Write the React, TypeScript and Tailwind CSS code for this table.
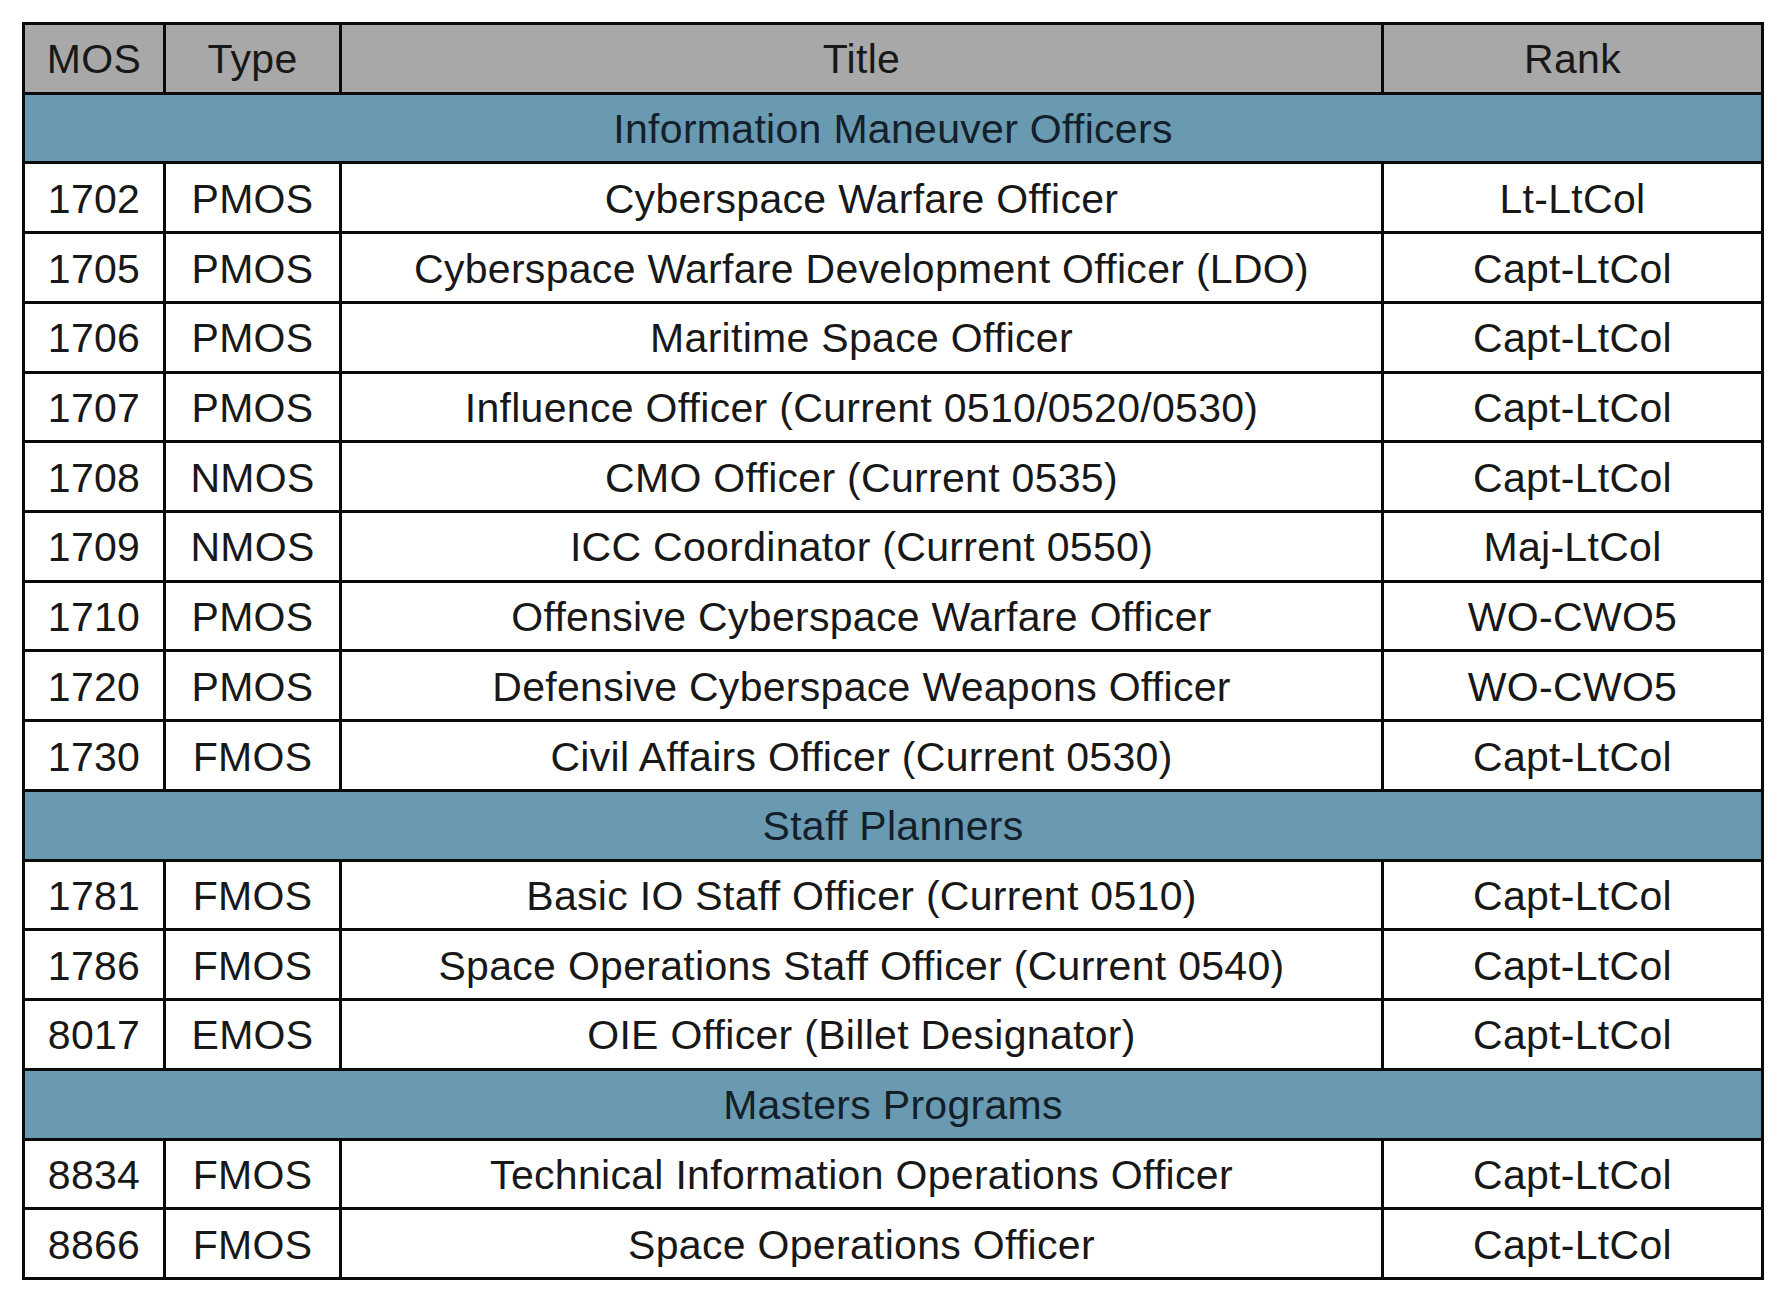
import React from "react";

type Row = { mos: string; type: string; title: string; rank: string } | { section: string };

const rows: Row[] = [
  { section: "Information Maneuver Officers" },
  { mos: "1702", type: "PMOS", title: "Cyberspace Warfare Officer", rank: "Lt-LtCol" },
  { mos: "1705", type: "PMOS", title: "Cyberspace Warfare Development Officer (LDO)", rank: "Capt-LtCol" },
  { mos: "1706", type: "PMOS", title: "Maritime Space Officer", rank: "Capt-LtCol" },
  { mos: "1707", type: "PMOS", title: "Influence Officer (Current 0510/0520/0530)", rank: "Capt-LtCol" },
  { mos: "1708", type: "NMOS", title: "CMO Officer (Current 0535)", rank: "Capt-LtCol" },
  { mos: "1709", type: "NMOS", title: "ICC Coordinator (Current 0550)", rank: "Maj-LtCol" },
  { mos: "1710", type: "PMOS", title: "Offensive Cyberspace Warfare Officer", rank: "WO-CWO5" },
  { mos: "1720", type: "PMOS", title: "Defensive Cyberspace Weapons Officer", rank: "WO-CWO5" },
  { mos: "1730", type: "FMOS", title: "Civil Affairs Officer (Current 0530)", rank: "Capt-LtCol" },
  { section: "Staff Planners" },
  { mos: "1781", type: "FMOS", title: "Basic IO Staff Officer (Current 0510)", rank: "Capt-LtCol" },
  { mos: "1786", type: "FMOS", title: "Space Operations Staff Officer (Current 0540)", rank: "Capt-LtCol" },
  { mos: "8017", type: "EMOS", title: "OIE Officer (Billet Designator)", rank: "Capt-LtCol" },
  { section: "Masters Programs" },
  { mos: "8834", type: "FMOS", title: "Technical Information Operations Officer", rank: "Capt-LtCol" },
  { mos: "8866", type: "FMOS", title: "Space Operations Officer", rank: "Capt-LtCol" },
];

const cell = "flex items-center justify-center whitespace-nowrap pt-[3px]";

export default function App() {
  return (
    <div
      className="min-h-[1303px] w-[1784px] bg-white pt-[22px] pl-[22px] text-[41px] leading-none tracking-[0.3px] text-[#181818]"
      style={{ fontFamily: '"Liberation Sans", Arial, sans-serif' }}
    >
      <div className="inline-grid grid-cols-[138px_173px_1039px_377px] auto-rows-[66.72px] gap-[3px] bg-[#0a0a0a] p-[3px]">
        <div className={`${cell} bg-[#a8a8a8]`}>MOS</div>
        <div className={`${cell} bg-[#a8a8a8]`}>Type</div>
        <div className={`${cell} bg-[#a8a8a8]`}>Title</div>
        <div className={`${cell} bg-[#a8a8a8]`}>Rank</div>
        {rows.map((r, i) =>
          "section" in r ? (
            <div key={i} className={`${cell} col-span-4 bg-[#6a9ab2] text-[#13202a]`}>
              {r.section}
            </div>
          ) : (
            <React.Fragment key={i}>
              <div className={`${cell} bg-white`}>{r.mos}</div>
              <div className={`${cell} bg-white`}>{r.type}</div>
              <div className={`${cell} bg-white`}>{r.title}</div>
              <div className={`${cell} bg-white`}>{r.rank}</div>
            </React.Fragment>
          )
        )}
      </div>
    </div>
  );
}
